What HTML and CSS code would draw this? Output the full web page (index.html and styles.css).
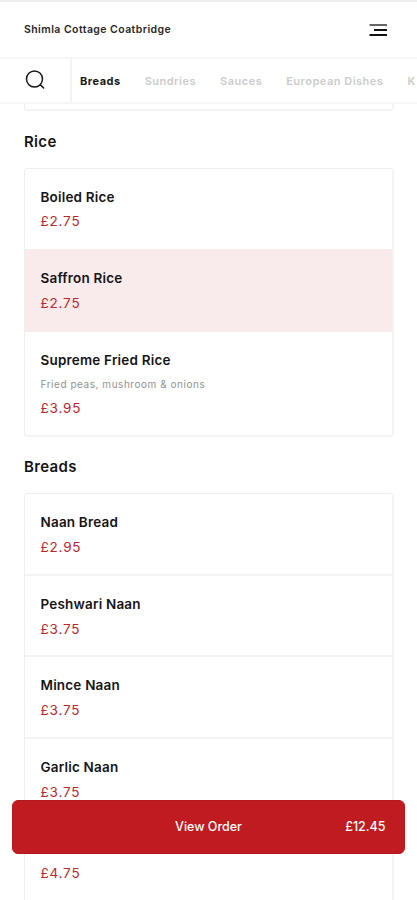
FILE: index.html
```html
<!DOCTYPE html>
<html lang="en">
<head>
<meta charset="utf-8">
<title>Shimla Cottage Coatbridge</title>
<link rel="stylesheet" href="styles.css">
</head>
<body>
<header class="header">
  <h1 class="brand">Shimla Cottage Coatbridge</h1>
  <svg class="menu-icon" width="18" height="14" viewBox="0 0 18 14" fill="none" stroke-width="2"><path stroke="#666" d="M.5 2H18"/><path stroke="#111" d="M5 7H18M.5 12H18"/></svg>
</header>
<nav class="nav">
  <div class="search"><svg width="20" height="20" viewBox="0 0 20 20" fill="none" stroke="#161616" stroke-width="1.5" stroke-linecap="round"><circle cx="9.5" cy="9" r="8"/><path d="M15.4 14.9L18.6 18"/></svg></div>
  <div class="tabs">
    <span class="tab active">Breads</span>
    <span class="tab">Sundries</span>
    <span class="tab">Sauces</span>
    <span class="tab">European Dishes</span>
    <span class="tab">K</span>
  </div>
</nav>
<main class="content">
  <div class="card previous"></div>
  <h2 class="title">Rice</h2>
  <section class="card">
    <article class="item"><h3 class="name">Boiled Rice</h3><p class="price">£2.75</p></article>
    <article class="item selected"><h3 class="name">Saffron Rice</h3><p class="price">£2.75</p></article>
    <article class="item"><h3 class="name">Supreme Fried Rice</h3><p class="desc">Fried peas, mushroom &amp; onions</p><p class="price">£3.95</p></article>
  </section>
  <h2 class="title">Breads</h2>
  <section class="card">
    <article class="item"><h3 class="name">Naan Bread</h3><p class="price">£2.95</p></article>
    <article class="item"><h3 class="name">Peshwari Naan</h3><p class="price">£3.75</p></article>
    <article class="item"><h3 class="name">Mince Naan</h3><p class="price">£3.75</p></article>
    <article class="item"><h3 class="name">Garlic Naan</h3><p class="price">£3.75</p></article>
    <article class="item"><h3 class="name">Keema Naan</h3><p class="price">£4.75</p></article>
  </section>
</main>
<button class="order"><span class="order-label">View Order</span><span class="order-total">£12.45</span></button>
</body>
</html>
```
FILE: styles.css
```css
* { box-sizing: border-box; }
html, body { height: 900px; overflow: hidden; }
body { margin: 0; background: #fff; color: #151515; font-family: Inter, "Liberation Sans", sans-serif; }
h1, h2, h3, p { margin: 0; }
.header { height: 59px; padding: 0 30px 0 24px; display: flex; align-items: center; justify-content: space-between; border-top: 2px solid #ededed; border-bottom: 2px solid #f5f5f5; }
.brand { padding-top: 1px; font-size: 10.5px; line-height: 14px; font-weight: 600; letter-spacing: .43px; color: #282828; }
.menu-icon { display: block; }
.nav { height: 45px; display: flex; border-bottom: 2px solid #f5f5f5; overflow: hidden; }
.search { flex: 0 0 72px; padding: 11px 0 0 25px; border-right: 2px solid #f4f4f4; }
.search svg { display: block; }
.tabs { display: flex; align-items: center; gap: 24px; padding: 0 0 0 8px; white-space: nowrap; }
.tab { font-size: 11px; line-height: 14px; font-weight: 600; letter-spacing: .5px; color: #ccc; }
.tab.active { color: #181818; font-weight: 700; }
.content { padding: 0 23px 0 24px; }
.card { border: 1px solid #eee; border-width: 1px 2px 2px 1px; border-color: #eee #f4f4f4 #f4f4f4 #eee; border-radius: 4px; overflow: hidden; }
.card.previous { height: 7px; border-top: 0; border-radius: 0 0 4px 4px; }
.title { height: 56px; padding-top: 19px; font-size: 15px; line-height: 22px; font-weight: 600; letter-spacing: .33px; }
.previous + .title { height: 57px; padding-top: 20px; }
.item { height: 81.6px; padding: 18px 16px 0 15.5px; border-bottom: 2px solid #f4f4f4; }
.item:last-child { border-bottom: 0; }
.item:has(.desc) { height: 103px; }
.item:has(+ .selected) { height: 80px; border-bottom: 0; }
.selected { height: 83px; padding-top: 19px; background: #f9eaeb; border-color: #f9eaeb; }
.name { font-size: 13.5px; line-height: 20px; font-weight: 600; letter-spacing: .19px; }
.desc { padding-top: 6px; font-size: 10px; line-height: 16px; letter-spacing: .54px; color: #929292; }
.price { padding-top: 5px; font-size: 13.5px; line-height: 20px; letter-spacing: .8px; color: #bd242c; }
.item:has(+ .selected) .price { padding-top: 4px; }
.desc + .price { padding-top: 6px; }
.order { position: absolute; left: 12px; top: 799.5px; width: 393px; height: 54px; padding: 0 18.5px; display: grid; grid-template-columns: 1fr auto 1fr; align-items: center; border: 1px solid #b6181f; border-radius: 6px; background: #c01b20; color: #fff; font-family: inherit; font-size: 12.5px; font-weight: 500; }
.order-label { grid-column: 2; }
.order-total { text-align: right; }
```
